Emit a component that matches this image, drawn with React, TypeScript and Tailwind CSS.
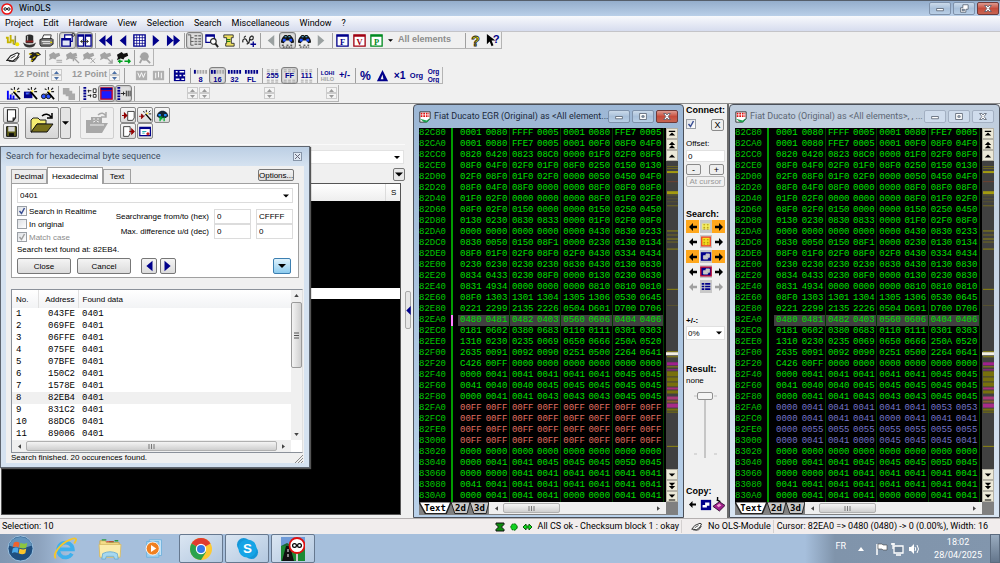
import type { ReactNode } from "react";
import { clsx } from "clsx";

const NAVY = "#00008b";
const GREY = "#a3a3a3";

/* ---------- toolbar glyphs, all on a 16x16 grid ---------- */

const left = (c: string) => <path d="M12 2v12L5 8z" fill={c} />;
const right = (c: string) => <path d="M4 2v12l7-6z" fill={c} />;

const label = (text: string, size = 8, y = 11, color = NAVY) => (
  <text x="8" y={y} textAnchor="middle" fontSize={size} fontWeight="bold" fill={color} fontFamily="Liberation Sans, sans-serif">
    {text}
  </text>
);

const dots = (c: string, y: number) => (
  <path d={`M2 ${y}h12M2 ${y + 2}h12`} stroke={c} strokeWidth="1" strokeDasharray="3 1.5" />
);

const binoculars = (
  <>
    <path d="M1 10c0-4 2-6 4-8h2l1 1 1-1h2c2 2 4 4 4 8l-3 1-2-3H6l-2 3z" fill="#111" />
    <path d="M3 6h3v3H3zM10 6h3v3h-3z" fill="#1d4fff" />
    <path d="M5 4h2M9 4h2" stroke="#5fd0ff" />
    <path d="M2 13h3M7 13h2M11 13h3M3 15h10" stroke="#111" strokeDasharray="2 1" />
  </>
);

const letterBox = (text: string, c: string) => (
  <>
    <path d="M2 2h12v12H2z" fill="#fff" stroke={c} strokeWidth="1.4" />
    <path d="M2 3h12" stroke={c} strokeWidth="2" />
    <text x="8" y="12.5" textAnchor="middle" fontSize="9" fontWeight="bold" fill={c} fontFamily="Liberation Serif, serif">
      {text}
    </text>
  </>
);

const wand = (
  <>
    <path d="M8 6l7 8" stroke="#000" strokeWidth="1.8" />
    <path d="M9 1v3M14 2l-2 2M15 6h-3M5 3l2 1M7 8l-1 1" stroke="#222" strokeWidth="1.2" />
    <path d="M9 5l2 1" stroke="#ffe94a" strokeWidth="2" />
  </>
);

const plug = (c: string, extra?: ReactNode) => (
  <>
    <path d="M1 5l5-3 2 2 4-1 1 3-4 2-1 2-3-1-4 2 1-3z" fill={c} />
    {extra}
  </>
);

const hand = (
  <>
    <path d="M1 11l4-5 7-3 2 1-2 4-5 4-3-1z" fill="#fff" stroke="#222" strokeWidth="1.2" />
    <path d="M5 9l5-3M3 12h7l4-5" fill="none" stroke="#222" />
  </>
);

const bars = (fill: string) => (
  <path d="M2 2v4M5 2v4M8 2v4M11 2v4M14 2v4" stroke={fill} strokeWidth="2" />
);

const grid = (
  <>
    <path d="M2 2h12v12H2z" fill="#fff" stroke={NAVY} strokeWidth="1.5" />
    <path d="M2 5h12M2 8h12M2 11h12M5 2v12M8 2v12M11 2v12" stroke={NAVY} strokeWidth=".8" />
  </>
);

const glyphs: Record<string, ReactNode> = {
  wave: (
    <>
      <path d="M1 5h2v5h3V2M5 8h4v4" fill="none" stroke="#c5b400" strokeWidth="2" />
      <path d="M11 3v9M9 12h5" stroke="#8a8a60" strokeWidth="1.6" />
      <circle cx="13" cy="12" r="2.2" fill="#f2e400" />
    </>
  ),
  hat: (
    <>
      <path d="M4 3q4-3 8 0v8H4z" fill="#2b2b2b" />
      <path d="M4 8h8v2H4z" fill="#822" />
      <path d="M1 10q7 5 14 0l-2 4q-5 3-10 0z" fill="#333" />
      <path d="M6 3v5" stroke="#ccc" />
    </>
  ),
  print: (
    <>
      <path d="M5 2h8l-1 5H3z" fill="#fff" stroke="#333" />
      <path d="M1 7l3-1h10l1 1v5l-3 2H2l-1-2z" fill="#777" stroke="#222" />
      <path d="M3 9h9M4 11h8" stroke="#eee" />
      <path d="M12 10h2" stroke="#e6d600" strokeWidth="1.5" />
    </>
  ),
  windows: (
    <>
      <path d="M5 2h8v7H5z" fill="#fff" stroke={NAVY} strokeWidth="1.3" />
      <path d="M2 6h9v8H2z" fill="#dfe4f5" stroke={NAVY} strokeWidth="1.5" />
      <path d="M2 7h9" stroke={NAVY} strokeWidth="2" />
      <circle cx="14" cy="2" r="1.5" fill="none" stroke="#333" />
    </>
  ),
  split: (
    <>
      <path d="M1 2h6v12H1zM9 2h6v12H9z" fill="#fff" stroke={NAVY} strokeWidth="1.4" />
      <path d="M1 3h6M9 3h6" stroke={NAVY} strokeWidth="2" />
      <path d="M4 9h8M6 7L4 9l2 2M10 7l2 2-2 2" stroke="#222" fill="none" />
    </>
  ),
  first: <path d="M8 2v12L1 8zM15 2v12L8 8z" fill={NAVY} />,
  prev: left(NAVY),
  grid,
  next: right(NAVY),
  last: <path d="M1 2v12l7-6zM8 2v12l7-6z" fill={NAVY} />,
  tree: (
    <>
      <path d="M1 2h3M4 2v11M4 5h3M4 9h3M4 13h3" stroke="#555" fill="none" />
      <path d="M8 3h3M8 6h3M8 9h3M8 12h3M12 3h3M12 6h3M12 9h3M12 12h3" stroke="#777" strokeWidth="1.6" />
    </>
  ),
  zoomwin: (
    <>
      <path d="M2 2h9v8H2z" fill="#fff" stroke={NAVY} strokeWidth="1.3" />
      <path d="M2 3h9" stroke={NAVY} strokeWidth="2" />
      <circle cx="10" cy="9" r="3" fill="#fff" stroke="#222" strokeWidth="1.2" />
      <path d="M12 11l3 4" stroke="#222" strokeWidth="2" />
    </>
  ),
  scroll: (
    <>
      <path d="M3 2h10v3h-2v6h3v3H5v-3h1V5H3z" fill="#f0e060" stroke="#333" />
      <path d="M6 7h4M6 9h4" stroke="#087808" />
    </>
  ),
  chain: (
    <>
      <path d="M1 10c-1-4 3-5 4-2s3 3 3-1 4-5 4-2-3 3-4 1M2 5l2-2M5 12l3-2" fill="none" stroke="#222" strokeWidth="1.3" />
      <path d="M9 12h6M12 9v6" stroke={NAVY} strokeWidth="1.4" />
    </>
  ),
  prevOff: left("#9aa0a0"),
  nextOff: right("#9aa0a0"),
  findText: binoculars,
  findHex: binoculars,
  boxF: letterBox("F", NAVY),
  boxV: letterBox("V", "#a00010"),
  boxP: letterBox("P", "#008a20"),
  help: (
    <text x="8" y="14" textAnchor="middle" fontSize="15" fontWeight="bold" fill="#f5ea00" stroke="#222" strokeWidth="0.9" fontFamily="Liberation Sans, sans-serif">
      ?
    </text>
  ),
  whats: (
    <>
      <path d="M2 1v11l3-3 2 5 2-1-2-5h4z" fill="#000" />
      <text x="12" y="11" textAnchor="middle" fontSize="12" fontWeight="bold" fill={NAVY} fontFamily="Liberation Sans, sans-serif">
        ?
      </text>
    </>
  ),
  hand,
  plugYellow: (
    <>
      <path d="M2 4l4-2 2 1 4-1 3 3-4 2-2 3-3 3-2-1 1-3-3-1 2-2z" fill="#222" />
      <path d="M2 4l3 1M6 9l3-2M10 4l3 1M4 12l2-1" stroke="#e8cf00" strokeWidth="1.2" />
    </>
  ),
  plugEq: plug(GREY, <path d="M9 11h6M9 13h6" stroke={GREY} />),
  plugUp: plug(GREY, <path d="M9 8h4M9 8v4M9 8l6 6" stroke={GREY} strokeWidth="1.5" />),
  plugX: plug(GREY, <path d="M9 9l5 5M14 9l-5 5M8 9h3" stroke={GREY} />),
  plugDown: plug(GREY, <path d="M8 8l6 6M14 10v4h-4" stroke={GREY} strokeWidth="1.5" fill="none" />),
  plugGo: plug("#111", <path d="M2 12h5M4 10v4M9 12h6M13 10l2 2-2 2" stroke="#00a020" strokeWidth="1.6" fill="none" />),
  magnet: (
    <>
      <circle cx="8" cy="7" r="4.5" fill={GREY} />
      <path d="M3 7h9M5 10l-2 4M10 10l4 4" stroke={GREY} strokeWidth="2" />
    </>
  ),
  chipA: (
    <>
      <path d="M2 3h12v10H2z" fill="#b0b0b0" />
      <path d="M4 5l2 5 2-5 2 5 2-5" fill="none" stroke="#fff" />
    </>
  ),
  chipB: (
    <>
      <path d="M2 3h12v10H2z" fill="#b0b0b0" />
      <path d="M5 5v6M8 4v6M11 5v6" stroke="#fff" />
    </>
  ),
  table: (
    <>
      <path d="M2 2h12v12H2z" fill={NAVY} />
      <path d="M4 4h2M8 4h5M4 8h2M8 8h2M12 8h2M4 12h4M10 12h3" stroke="#fff" strokeWidth="1.5" />
    </>
  ),
  b8: (
    <>
      {bars("#a8a8a8")}
      <path d="M2 2v4" stroke={NAVY} strokeWidth="2" />
      {label("8", 8, 15)}
    </>
  ),
  b16: (
    <>
      {bars("#a8a8a8")}
      <path d="M2 2v4M5 2v4" stroke={NAVY} strokeWidth="2" />
      {label("16", 8, 15)}
    </>
  ),
  b32: (
    <>
      {bars(NAVY)}
      {label("32", 8, 15)}
    </>
  ),
  bFl: (
    <>
      {bars(NAVY)}
      {label("FL", 8, 15)}
    </>
  ),
  n255: (
    <>
      {dots(GREY, 2)}
      {dots(GREY, 13)}
      {label("255", 8)}
    </>
  ),
  nFF: (
    <>
      {dots(GREY, 2)}
      {dots(GREY, 13)}
      {label("FF", 8)}
    </>
  ),
  n111: (
    <>
      {dots(GREY, 2)}
      {dots(GREY, 13)}
      {label("111", 8)}
    </>
  ),
  lohi: (
    <>
      {label("LOHI", 6, 7)}
      {label("HILO", 6, 14, GREY)}
    </>
  ),
  sign: label("+/-", 10, 11),
  percent: label("%", 13, 13),
  delta: <path d="M8 2l6 12H2zM8 7l-2 5h3z" fill={NAVY} fillRule="evenodd" />,
  x1: label("×1", 11, 12),
  org: label("Org", 8),
  orgOrg: (
    <>
      {label("Org", 7, 6)}
      {label("Org", 7, 15)}
    </>
  ),
  wandBars: (
    <>
      <path d="M2 5v9M5 9v5M8 10v4" stroke="#0000ff" strokeWidth="2" />
      <path d="M1 14h12" stroke={NAVY} />
      {wand}
    </>
  ),
  wandBox: (
    <>
      <path d="M1 6h9v7H1z" fill={NAVY} />
      <path d="M3 8h4" stroke="#4b6bff" strokeWidth="2" />
      {wand}
    </>
  ),
  wandFind: (
    <>
      <circle cx="4" cy="11" r="2.5" fill="#2d55ff" stroke="#111" />
      <circle cx="9" cy="11" r="2.5" fill="#2d55ff" stroke="#111" />
      {wand}
    </>
  ),
  stack: <path d="M2 2h7v3h3v3h3v7H8v-4H5V9H2z" fill="#aaa" />,
  mapList: (
    <>
      <path d="M3 1v14" stroke={NAVY} strokeWidth="3" strokeDasharray="2 1" />
      <path d="M6 5h4M6 10h4M7 4v3M9 9v3" stroke="#222" />
      <path d="M12 3h3v4h-3zM12 9h3v3h-3z" fill="#fff" stroke="#222" />
    </>
  ),
  redBox: (
    <>
      <path d="M2 2h12v12H2z" fill="#1b1bff" stroke="#c00020" strokeWidth="1.4" />
      <path d="M2 3h12" stroke={NAVY} strokeWidth="2" />
      <path d="M2 5h12" stroke="#c00020" />
    </>
  ),
  mapBars: (
    <>
      <path d="M3 1v14" stroke={NAVY} strokeWidth="3" strokeDasharray="2 1" />
      <path d="M5 8h5M8 6v4M11 5v6M13 5v6M15 5v6" stroke="#222" />
    </>
  ),
  page: <path d="M3 1h10v10l-3 4H3zM13 11h-3v4" fill="#fff" stroke="#222" strokeWidth="1.3" />,
  save: (
    <>
      <path d="M2 2h12v12H2z" fill="#5e5e18" stroke="#111" strokeWidth="1.2" />
      <path d="M4 2h8v6H4z" fill="#d8d8d8" />
      <path d="M5 10h6v4H5z" fill="#111" />
    </>
  ),
  pageIn: (
    <>
      <path d="M7 3h8v8l-2 3H7z" fill="#fff" stroke="#222" />
      <path d="M0 8h6M3 5l3 3-3 3z" stroke="#900000" fill="#900000" strokeWidth="1.3" />
    </>
  ),
  pageOut: (
    <>
      <path d="M2 2h8v8l-2 4H2z" fill="#fff" stroke="#222" />
      <path d="M9 8h4M12 5l3 3-3 3z" stroke="#900000" fill="#900000" strokeWidth="1.3" />
    </>
  ),
  wandIn: (
    <>
      <path d="M0 9h5M3 6l3 3-3 3z" stroke="#900000" fill="#900000" />
      {wand}
    </>
  ),
  findGreen: (
    <>
      <path d="M1 9c0-4 3-7 7-7s7 3 7 7l-3 2H4z" fill="#123" />
      <path d="M3 6h3v3H3zM10 6h3v3h-3z" fill="#1d8fff" />
      <path d="M5 15v-5h3M5 12h3M10 15v-5" stroke="#00b030" strokeWidth="1.6" fill="none" />
    </>
  ),
  card: (
    <>
      <path d="M1 3h13v10H1z" fill="#fff" stroke={NAVY} strokeWidth="1.5" />
      <path d="M1 4h13" stroke={NAVY} strokeWidth="2" />
      <path d="M4 8h5M4 10h3" stroke="#00a0a0" />
      <path d="M9 11h4M11 9v4" stroke="#c00000" strokeWidth="1.5" />
    </>
  ),
};

const Glyph = ({ name, className = "size-[15px]" }: { name: string; className?: string }) => (
  <svg viewBox="0 0 16 16" className={className} aria-hidden="true">
    {glyphs[name]}
  </svg>
);

const Tool = ({ name, pressed }: { name: string; pressed?: boolean }) => (
  <button
    type="button"
    aria-label={name}
    className={clsx(
      "flex h-[17px] w-[17px] shrink-0 items-center justify-center rounded-[3px]",
      pressed && "border border-[#808080] bg-[#e0e0e0] shadow-[inset_0_0_2px_#999]"
    )}
  >
    <Glyph name={name} />
  </button>
);

const Sep = () => (
  <span className="flex h-[15px] w-1 shrink-0 justify-center">
    <span className="w-px bg-[#a0a0a0]" />
  </span>
);

const Tools = ({ items }: { items: string[] }) => (
  <>
    {items.map((item, i) =>
      item === "|" ? <Sep key={i} /> : <Tool key={i} name={item.replace("!", "")} pressed={item.endsWith("!")} />
    )}
  </>
);

const Spinner = ({ active }: { active?: boolean }) => (
  <span className="flex w-[11px] shrink-0 flex-col">
    {["up", "down"].map((dir) => (
      <button
        key={dir}
        type="button"
        aria-label={dir}
        className="flex h-[6px] items-center justify-center border border-[#cccccc] bg-[#f4f4f4]"
      >
        <svg viewBox="0 0 5 3" className="h-[3px] w-[5px]">
          <path d={dir === "up" ? "M0 3h5L2.5 0z" : "M0 0h5L2.5 3z"} fill={active ? "#4b6fa5" : "#999"} />
        </svg>
      </button>
    ))}
  </span>
);

const Caret = ({ className = "h-1 w-[7px]" }: { className?: string }) => (
  <svg viewBox="0 0 8 4" className={clsx("shrink-0", className)} aria-hidden="true">
    <path d="M0 0h8L4 4z" fill="#000" />
  </svg>
);

const CheckBox = ({ id, checked, disabled }: { id: string; checked?: boolean; disabled?: boolean }) => (
  <span className="relative inline-flex size-[10px] shrink-0">
    <input
      id={id}
      type="checkbox"
      defaultChecked={checked}
      disabled={disabled}
      className="peer size-full appearance-none border border-[#9a9fa5] bg-linear-to-br from-[#dde0e4] to-white"
    />
    <svg viewBox="0 0 10 10" className="pointer-events-none absolute inset-0 hidden size-full peer-checked:block">
      <path d="M2.5 5l2 2.500 3-5.500" fill="none" stroke={disabled ? "#a0a0a0" : "#3a4f94"} strokeWidth="1.5" />
    </svg>
  </span>
);

const RoundLogo = ({ className }: { className: string }) => (
  <svg viewBox="0 0 16 16" className={className} aria-hidden="true">
    <circle cx="8" cy="8" r="6.8" fill="#fff" stroke="#ee1111" strokeWidth="2" />
    <circle cx="5.6" cy="8" r="1.7" fill="none" stroke="#000" strokeWidth="1.2" />
    <circle cx="10.4" cy="8" r="1.7" fill="none" stroke="#000" strokeWidth="1.2" />
    <path d="M7 8h2" stroke="#000" />
  </svg>
);

/* ---------- window caption buttons ---------- */

const captionPaths: Record<string, string> = {
  minimize: "M3 6h9v3H3z",
  maximize: "M3 2h9v8H3zM6 5h3v2H6z",
  restore: "M6 1h7v6h-3v4H3V5h3zM5 7h3v2H5z",
  close: "M3 2h3l1.500 2L9 2h3L9 6l3 4H9L7.500 8 6 10H3l3-4z",
};

const CaptionButton = ({ kind, red, dim }: { kind: string; red?: boolean; dim?: boolean }) => (
  <button
    type="button"
    aria-label={kind}
    className={clsx(
      "flex h-[13px] w-[22px] items-center justify-center rounded-[2px] border",
      red
        ? "border-[#6e3a3a] bg-linear-to-b from-[#dd9a90] via-[#c64c3c] to-[#c66452]"
        : dim
          ? "border-[#a3b0c2] bg-[#cfdcec]"
          : "border-[#7f92ab] bg-linear-to-b from-[#cbdaea] via-[#a9c0da] to-[#b9cfe6]"
    )}
  >
    <svg viewBox="0 0 15 12" className="h-[9px] w-[12px]">
      <path d={captionPaths[kind]} fill="#fff" fillRule="evenodd" stroke="#4c5666" strokeWidth="1" />
    </svg>
  </button>
);

/* ---------- hex dump ---------- */

const START = 0x82c80;
const CURSOR = 0x82ea0;

const dump = `0001 0080 FFFF 0005 0001 0080 FFE7 0005
0001 0080 FFE7 0005 0001 00F0 08F0 04F0
0820 0420 0823 08C0 0000 01F0 02F0 08F0
08F0 04F0 02F0 01F0 08F0 0250 0150 0130
02F0 08F0 01F0 02F0 0000 0050 0450 04F0
08F0 04F0 08F0 0000 0000 08F0 08F0 08F0
01F0 02F0 0000 0000 0000 08F0 01F0 02F0
08F0 02F0 0150 0000 0000 0150 0250 0450
0130 0230 0830 0833 0000 01F0 02F0 08F0
0000 0000 0000 0000 0000 0430 0830 0233
0830 0050 0150 08F1 0000 0230 0130 0134
08F0 01F0 02F0 08F0 02F0 0430 0334 0434
0230 0230 0230 0230 0830 0430 0130 0830
0834 0433 0230 08F0 0000 0130 0230 0830
0831 4934 0000 0000 0000 0810 0810 0810
08F0 1303 1301 1304 1305 1306 0530 0645
0221 2299 2135 2226 0504 D601 D700 D706
0480 0481 0482 0403 0560 0606 0404 0406
0181 0602 0380 0683 0110 0111 0301 0303
1310 0230 0235 0069 0650 0666 250A 0520
2635 0091 0092 0090 0251 0500 2264 0641
C426 00FF 0000 0000 0000 0000 0000 0000
0000 0041 0041 0041 0041 0041 0045 0045
0041 0040 0040 0045 0045 0045 0045 0045
0000 0041 0041 0043 0043 0043 0045 0045
0000 0041 0041 0041 0041 0041 0053 0053
0000 0041 0041 0041 0000 0041 0041 0041
0000 0055 0055 0055 0055 0055 0055 0055
0000 0041 0041 0000 0045 0045 0045 0041
0000 0000 0000 0000 0000 0000 0000 0000
0000 0041 0041 0045 0045 0045 005D 0045
0000 0000 0041 0041 0041 0041 0041 0041
0041 0041 0041 0041 0041 0041 0041 0041
0000 0041 0041 0041 0000 0000 0041 0041`
  .split("\n")
  .map((line) => line.split(" "));

const CHANGED = [25, 26, 27, 28];

// [offset, thickness, colour] along the overview strip
const overview: [number, number, string][] = [
  [5, 1, "#6b6420"], [7, 1, "#6b6420"], [10, 2, "#a39a10"], [20, 1, "#6b4030"], [30, 3, "#a39a10"],
  [34, 1, "#575230"], [37, 1, "#575230"], [40, 1, "#575230"], [44, 1, "#706820"], [69, 1, "#8d8410"],
  [73, 1, "#706820"], [77, 1, "#8d8410"], [80, 1, "#706820"], [87, 1, "#8d8410"], [127, 1, "#8d8410"],
  [143, 1, "#575230"], [189, 1, "#8d8410"], [194, 1, "#8d8410"], [200, 3, "#a0208c"], [204, 1, "#8d8410"],
  [207, 1, "#a0208c"], [209, 5, "#77700c"], [215, 4, "#77700c"], [220, 4, "#77700c"], [225, 2, "#a82c78"],
  [228, 3, "#77700c"], [234, 3, "#a83878"], [238, 2, "#8d6030"], [241, 4, "#a82c88"], [246, 2, "#77700c"],
  [249, 1, "#77700c"], [283, 1, "#8d8410"],
];

const ScrollKey = ({ d, name }: { d: string; name: string }) => (
  <button type="button" aria-label={name} className="flex h-[11px] w-3 items-center justify-center border border-[#b5b2a6] bg-[#ece9d8]">
    <svg viewBox="0 0 10 10" className="size-[8px]">
      <path d={d} fill="#000" />
    </svg>
  </button>
);

const SheetTab = ({ text, active }: { text: string; active?: boolean }) => (
  <button type="button" className={clsx("relative h-3 shrink-0", active ? "w-[32px]" : "w-[19px]")}>
    <svg viewBox="0 0 20 12" preserveAspectRatio="none" className="absolute inset-0 h-full w-full">
      <path d="M0 0h20l-3 11.500H4z" fill={active ? "#fff" : "#c8c8c8"} stroke="#222" strokeWidth="1" />
    </svg>
    <span className="relative font-['DejaVu_Sans_Mono',monospace] text-[9px] leading-[11px] font-bold text-black">{text}</span>
  </button>
);

const HScroll = ({ thumb }: { thumb: string }) => (
  <div className="flex h-3 flex-1 items-center bg-[#efefef] px-[6px]">
    <svg viewBox="0 0 4 6" className="h-[5px] w-[3px]">
      <path d="M4 0v6L0 3z" fill="#444" />
    </svg>
    <div className={clsx("mx-[5px] flex h-[10px] items-center justify-center rounded-[2px] border border-[#b0b0b0] bg-linear-to-b from-[#f4f4f4] to-[#cfcfcf]", thumb)}>
      <svg viewBox="0 0 7 5" className="h-[5px] w-[7px]">
        <path d="M1 0v5M3.500 0v5M6 0v5" stroke="#777" />
      </svg>
    </div>
    <svg viewBox="0 0 4 6" className="ml-auto h-[5px] w-[3px]">
      <path d="M0 0v6l4-3z" fill="#444" />
    </svg>
  </div>
);

const HexWindow = ({ title, active }: { title: string; active?: boolean }) => (
  <section
    className={clsx(
      "flex min-w-0 flex-1 flex-col rounded-t-[4px] border border-[#4a4f58] px-[5px] pb-[2px]",
      active ? "bg-linear-to-b from-[#9db7d5] to-[#b9d1ea]" : "bg-linear-to-b from-[#bfcddd] to-[#d7e4f2]"
    )}
  >
    <header className="flex h-[23px] shrink-0 items-center gap-[3px]">
      <svg viewBox="0 0 14 14" className="size-[12px] shrink-0">
        <path d="M1 1h12v8l-4 4H1z" fill="#fff" stroke="#222" />
        <path d="M1 9l5 4h4l3-5-4 3z" fill="#1fa050" />
        <path d="M2 3h10M2 6h10" stroke="#e01010" strokeWidth="2" strokeDasharray="2 1" />
      </svg>
      <h2 className={clsx("min-w-0 flex-1 text-[9px] whitespace-nowrap", active ? "text-[#1c2a3c]" : "text-[#5c6673]")}>{title}</h2>
      <div className="flex gap-[2px]">
        <CaptionButton kind="minimize" dim={!active} />
        <CaptionButton kind="maximize" dim={!active} />
        <CaptionButton kind="close" red={active} dim={!active} />
      </div>
    </header>

    <div className="flex min-h-0 flex-1 bg-black">
      <div className="min-w-0 flex-1 overflow-hidden pr-[2px]">
        <table className="w-full table-fixed border-collapse font-['Liberation_Mono',monospace] text-[9px] leading-[11px] text-[#00e000]">
          <colgroup>
            <col className="w-[33px]" />
            <col className="w-[6px]" />
            {dump[0].map((_, i) => (
              <col key={i} />
            ))}
          </colgroup>
          <tbody>
            {dump.map((row, i) => {
              const address = START + i * 0x20;
              const isCursor = address === CURSOR;
              const changed = CHANGED.includes(i);
              return (
                <tr key={address} className="h-[11px]">
                  <th scope="row" className="p-0 text-left font-normal text-[#00c800]">
                    {address.toString(16).toUpperCase()}
                  </th>
                  <td className={clsx("border-l-2 p-0", active && isCursor ? "border-[#ff80ff]" : "border-[#009c00]")} />
                  {row.map((word, j) => (
                    <td
                      key={j}
                      className={clsx(
                        "p-0 pl-[2px]",
                        j % 2 === 1 && "border-r border-[#003c00]",
                        isCursor && "bg-[#404040]",
                        changed && (active ? "text-[#e07062]" : "text-[#7474c8]")
                      )}
                    >
                      {changed && active ? "00FF" : word}
                    </td>
                  ))}
                </tr>
              );
            })}
          </tbody>
        </table>
      </div>
      <div className="flex w-3 shrink-0 flex-col">
        <ScrollKey name="to top" d="M1 1h8v1.500H1zM1 7h8L5 3z" />
        <ScrollKey name="page up" d="M1 5h8L5 1zM1 9h8L5 5z" />
        <ScrollKey name="line up" d="M1 7h8L5 3z" />
        <svg viewBox="0 0 12 306" preserveAspectRatio="none" className="min-h-0 w-full flex-1 bg-[#404040]">
          {overview.map(([y, h, color]) => (
            <rect key={y} x="1" y={y} width="11" height={h} fill={color} />
          ))}
          <rect x="0" y="190" width="12" height="3" fill="#f4efe0" />
        </svg>
        <ScrollKey name="line down" d="M1 3h8L5 7z" />
        <ScrollKey name="page down" d="M1 1h8L5 5zM1 5h8L5 9z" />
        <ScrollKey name="to bottom" d="M1 2h8L5 6zM1 8h8v1.500H1z" />
      </div>
    </div>

    <footer className="flex h-[13px] shrink-0 bg-[#808080]">
      <SheetTab text="Text" active />
      <SheetTab text="2d" />
      <SheetTab text="3d" />
      <HScroll thumb="w-[57px]" />
      <span className="w-3 bg-[#808080]" />
    </footer>
  </section>
);

/* ---------- connect strip between the two windows ---------- */

const arrowL = "M0 5l5-5v3.500h5v3H5V10z";
const arrowR = "M10 5L5 0v3.500H0v3h5V10z";

const searchRows = [
  { name: "byte", on: true, art: <path d="M2 3h10v8H2z" fill="#f6f060" stroke="#c8c8c8" /> },
  { name: "map", art: <path d="M2 2h10v10H2z" fill="#f6e020" stroke="#f04020" strokeWidth="1.5" /> },
  { name: "area", on: true, art: <path d="M1 2h12v10H1z" fill={NAVY} /> },
  { name: "frame", art: <path d="M1 2h12v10H1z" fill={NAVY} stroke="#c00030" strokeWidth="1.5" /> },
  { name: "list", off: true, art: <path d="M2 4h3M6 4h6M2 7h3M6 7h6M2 10h3M6 10h6" stroke={NAVY} strokeWidth="2" /> },
];

const smallButton = "h-[11px] w-[15px] rounded-[2px] border border-[#8a8a8a] bg-[#eee] text-[9px] leading-[8px]";

const ConnectPanel = () => (
  <aside className="flex w-[45px] shrink-0 flex-col overflow-hidden border-r-2 border-[#6c6c6c] bg-[#f0f0f0] pl-[2px] font-['Liberation_Sans',sans-serif] text-[8px] leading-[11px] text-black">
    <h3 className="mt-px text-[9px] font-bold">Connect:</h3>
    <div className="mt-[3px] flex items-start justify-between pr-[3px]">
      <label htmlFor="connect" aria-label="Connect" className="flex">
        <CheckBox id="connect" checked />
      </label>
      <button type="button" className="h-3 w-[13px] rounded-[2px] border border-[#8a8a8a] bg-[#eee] text-[9px] leading-[10px]">X</button>
    </div>
    <label htmlFor="offset" className="mt-[7px]">Offset:</label>
    <input id="offset" defaultValue="0" className="mt-[1px] h-3 w-[39px] border border-[#e0e0e0] bg-white px-px" />
    <div className="mt-[2px] flex justify-between pr-[3px]">
      <button type="button" className={smallButton}>-</button>
      <button type="button" className={smallButton}>+</button>
    </div>
    <button type="button" disabled className="mt-[1px] h-[11px] w-[39px] rounded-[2px] border border-[#b8b8b8] leading-[9px] text-[#999]">
      At cursor
    </button>

    <h3 className="mt-[22px] text-[9px] font-bold">Search:</h3>
    <div className="flex flex-col gap-[2px]">
      {searchRows.map((row) => (
        <div key={row.name} className="flex w-[39px] justify-between">
          {[arrowL, arrowR].map((d, i) => (
            <button
              key={d}
              type="button"
              aria-label={`${row.name} ${i ? "next" : "previous"}`}
              className={clsx("flex h-[13px] w-[13px] items-center justify-center", i ? "order-3" : "order-1", row.on && "bg-[#ffa71c]")}
            >
              <svg viewBox="0 0 10 10" className="size-[8px]">
                <path d={d} fill={row.off ? "#a0a0a0" : "#000"} />
              </svg>
            </button>
          ))}
          <svg viewBox="0 0 14 14" className="order-2 h-[13px] w-3 bg-[#c8c8c8]">
            {row.art}
            {(row.name === "byte" || row.name === "map") && (
              <path d="M4 5h2M8 5h2M4 8h2M8 8h2M4 10h2M8 10h2" stroke="#a08000" />
            )}
            {(row.name === "area" || row.name === "frame") && (
              <path d="M4 6h3V4h4v4H9v2H4z" fill="#c8c8c8" stroke="#c8c8c8" />
            )}
          </svg>
        </div>
      ))}
    </div>

    <label htmlFor="tolerance" className="mt-[22px] font-bold">+/-:</label>
    <div className="relative w-[39px]">
      <select id="tolerance" className="h-[14px] w-full appearance-none border border-[#e0e0e0] bg-white px-px">
        <option>0%</option>
      </select>
      <Caret className="pointer-events-none absolute top-[5px] right-[3px] h-1 w-[6px]" />
    </div>

    <h3 className="mt-[24px] text-[9px] font-bold">Result:</h3>
    <p>none</p>
    <svg viewBox="0 0 38 70" className="mt-1 h-[70px] w-[38px] shrink-0">
      <path d="M19 8v60" stroke="#b8b8b8" strokeWidth="1.5" />
      <path d="M8 6h3M28 6h3M8 64h3M28 64h3" stroke="#c0c0c0" />
      <rect x="11.5" y="2.5" width="15" height="7" rx="1.5" fill="#f4f4f4" stroke="#909090" />
    </svg>
    <h3 className="mt-[26px] text-[9px] font-bold">Copy:</h3>
    <div className="flex w-[39px] items-center justify-between">
      <svg viewBox="0 0 10 10" className="mx-[3px] size-[7px]">
        <path d={arrowL} />
      </svg>
      <svg viewBox="0 0 14 14" className="size-3">
        <path d="M1 1h12v12H1z" fill={NAVY} />
        <path d="M3 7h3V4h5v4H8v2H3z" fill="#fff" />
      </svg>
      <svg viewBox="0 0 14 16" className="h-[15px] w-[13px]">
        <path d="M1 10l7-5 6 4-6 6z" fill="#a0208c" stroke="#301030" />
        <path d="M6 0v4M5 3l4 2" stroke="#000" strokeWidth="1.5" />
        <path d="M5 9l3-2 2 2-3 2z" fill="#f0a0d0" />
      </svg>
    </div>
  </aside>
);

/* ---------- project panel on the left ---------- */

const PanelButton = ({ name, className, glyph = "size-[13px]" }: { name: string; className?: string; glyph?: string }) => (
  <button
    type="button"
    aria-label={name}
    className={clsx("flex h-4 w-4 items-center justify-center rounded-[2px] border border-[#8a8a8a] bg-linear-to-b from-[#f6f6f6] to-[#dadada]", className)}
  >
    <Glyph name={name} className={clsx("shrink-0", glyph)} />
  </button>
);

const ProjectPanel = () => (
  <div className="flex w-[411px] shrink-0 bg-[#f0f0f0]">
    <div className="flex min-w-0 flex-1 flex-col">
      <div className="flex h-[41px] items-start border-b border-[#fafafa] pt-[3px] pl-[3px]">
        <div className="flex flex-col">
          <PanelButton name="page" />
          <PanelButton name="save" />
        </div>
        <button type="button" aria-label="Open" className="ml-[6px] flex h-8 w-[34px] items-center justify-center rounded-[2px] border border-[#8a8a8a] bg-linear-to-b from-[#f4f4f4] to-[#d6d6d6]">
          <svg viewBox="0 0 26 24" className="h-[24px] w-[26px]">
            <path d="M2 9l2-2h5l2 2h6v4H8l-5 8H2z" fill="#f4ec70" stroke="#222" />
            <path d="M8 13h16l-6 8H2z" fill="#78701c" stroke="#111" />
            <path d="M13 5c3-3 7-2 9 1M23 2v5h-5" fill="none" stroke="#000" strokeWidth="1.5" />
          </svg>
        </button>
        <button type="button" aria-label="Recent" className="ml-px flex h-8 w-[11px] items-center justify-center rounded-[2px] border border-[#8a8a8a] bg-[#e4e4e4]">
          <Caret />
        </button>
        <button type="button" disabled aria-label="Import" className="ml-[9px] flex h-8 w-[34px] items-center justify-center rounded-[2px] border border-[#cfcfcf]">
          <svg viewBox="0 0 26 24" className="h-[24px] w-[26px]">
            <path d="M2 9h5V6h11v6h6l-6 10H2z" fill="#a8a8a8" />
            <path d="M9 8h2M13 8h2M9 11l3-1 3 1M6 14h14" stroke="#eee" />
            <path d="M14 4c3-3 6-2 8 1M22 1v5h-5" fill="none" stroke="#a8a8a8" strokeWidth="1.5" />
          </svg>
        </button>
        <div className="ml-[6px] grid grid-cols-3 gap-x-px">
          <PanelButton name="pageIn" />
          <PanelButton name="wandIn" />
          <PanelButton name="findGreen" />
          <PanelButton name="pageOut" />
          <PanelButton name="card" />
        </div>
      </div>
      <div className="mt-[5px] mr-px flex h-[14px] items-center justify-end border border-[#e2e2e2] bg-white pr-[3px]">
        <Caret className="h-[3px] w-[6px]" />
      </div>
      <div className="mt-1 flex justify-end">
        <button type="button" aria-label="Filter" className="flex h-[13px] w-3 items-center justify-center rounded-[2px] border border-[#777] bg-[#e8e8e8]">
          <Caret className="h-[5px] w-[8px]" />
        </button>
      </div>
      <div className="mt-[2px] mr-1 mb-[3px] ml-px flex flex-1 flex-col border border-[#555] bg-black">
        <div className="flex h-[17px] shrink-0 items-center justify-end bg-linear-to-b from-white to-[#eeeeee] font-['Liberation_Sans',sans-serif] text-[8px]">
          <span className="flex h-full w-[15px] items-center border-l border-[#dcdcdc] pl-[5px]">S</span>
        </div>
        <div className="mt-[87px] h-[11px] bg-white" />
      </div>
    </div>
    <button type="button" aria-label="Hide" className="mt-[187px] flex h-[38px] w-[6px] items-center justify-center rounded-[2px] border border-[#aaa] bg-[#e6e6e6]">
      <svg viewBox="0 0 5 10" className="h-[9px] w-[5px] shrink-0">
        <path d="M5 0v10L0 5z" fill={NAVY} />
      </svg>
    </button>
  </div>
);

/* ---------- search dialog ---------- */

const results = ["043FE", "069FE", "06FFE", "075FE", "07BFE", "150C2", "1578E", "82EB4", "831C2", "88DC6", "89006"];

const dialogButton = "rounded-[2px] border border-[#777] bg-linear-to-b from-[#f4f4f4] to-[#dcdcdc] text-center";
const fieldClass = "h-[15px] border border-[#dcdcdc] bg-white px-[2px]";
const tabClass = "border border-b-0 border-[#a0a0a0]";
const checkLabel = "flex h-3 items-center gap-[2px]";

const SearchDialog = () => (
  <div
    role="dialog"
    aria-labelledby="search-title"
    className="absolute top-[146px] left-0 flex w-[310px] flex-col border border-[#5f6670] bg-[#d5e2f0] px-[5px] pb-1 font-['Liberation_Sans',sans-serif] text-[8px] leading-[11px] text-black shadow-[1px_1px_1px_#555]"
  >
    <header className="-mx-[5px] flex h-[19px] items-center justify-between bg-linear-to-b from-[#bccfe4] to-[#d5e2f0] pr-[7px] pl-[5px]">
      <h2 id="search-title" className="font-['Roboto',sans-serif] text-[9px] text-[#3d4c60]">Search for hexadecimal byte sequence</h2>
      <button type="button" aria-label="Close dialog" className="flex h-[9px] w-[9px] items-center justify-center border border-[#8795a8] bg-[#dfe8f2]">
        <svg viewBox="0 0 6 6" className="size-[5px]">
          <path d="M0 0l6 6M6 0L0 6" stroke="#667" strokeWidth="1.2" />
        </svg>
      </button>
    </header>

    <div className="bg-[#f0f0f0] px-[5px] pt-px">
      <div className="flex items-end">
        <button type="button" className={clsx(tabClass, "h-[14px] w-[36px] bg-[#ededed]")}>Decimal</button>
        <button type="button" className={clsx(tabClass, "-mb-px h-[17px] w-[56px] bg-white")}>Hexadecimal</button>
        <button type="button" className={clsx(tabClass, "h-[14px] w-[28px] bg-[#ededed]")}>Text</button>
        <button type="button" className={clsx(dialogButton, "mr-[5px] mb-[2px] ml-auto h-3 w-[36px] leading-[9px]")}>Options...</button>
      </div>
      <div className="border border-[#a0a0a0] bg-white px-[5px] pt-1 pb-[3px]">
        <div className="relative">
          <input aria-label="Search for" defaultValue="0401" className="h-[15px] w-full border border-[#dcdcdc] px-[2px]" />
          <Caret className="absolute top-[6px] right-[4px] h-1 w-[6px]" />
        </div>
        <div className="flex justify-between">
          <div className="flex flex-col gap-px pt-[2px]">
            <label htmlFor="realtime" className={checkLabel}>
              <CheckBox id="realtime" checked /> Search in Realtime
            </label>
            <label htmlFor="original" className={checkLabel}>
              <CheckBox id="original" /> In original
            </label>
            <label htmlFor="match-case" className={clsx(checkLabel, "text-[#8c8c8c]")}>
              <CheckBox id="match-case" checked disabled /> Match case
            </label>
          </div>
          <div className="grid grid-cols-[auto_37px_37px] content-start items-center gap-x-[5px] pt-[6px]">
            <label htmlFor="range-from" className="text-right">Searchrange from/to (hex)</label>
            <input id="range-from" defaultValue="0" className={fieldClass} />
            <input aria-label="Range to" defaultValue="CFFFF" className={fieldClass} />
            <label htmlFor="diff-up" className="text-right">Max. difference u/d (dec)</label>
            <input id="diff-up" defaultValue="0" className={fieldClass} />
            <input aria-label="Difference down" defaultValue="0" className={fieldClass} />
          </div>
        </div>
        <p className="mt-px">Search text found at: 82EB4.</p>
        <div className="mt-[3px] flex items-center pr-[2px]">
          <button type="button" className={clsx(dialogButton, "h-4 w-[54px]")}>Close</button>
          <button type="button" className={clsx(dialogButton, "ml-[6px] h-4 w-[54px]")}>Cancel</button>
          <button type="button" aria-label="Previous" className={clsx(dialogButton, "ml-[10px] flex h-4 w-4 items-center justify-center")}>
            <Glyph name="prev" className="h-[14px] w-[14px] shrink-0" />
          </button>
          <button type="button" aria-label="Next" className={clsx(dialogButton, "ml-[3px] flex h-4 w-4 items-center justify-center")}>
            <Glyph name="next" className="h-[14px] w-[14px] shrink-0" />
          </button>
          <button type="button" aria-label="Less" className="ml-auto flex h-4 w-[18px] items-center justify-center rounded-[2px] border border-[#3c7fb1] bg-linear-to-b from-[#dff2fc] to-[#8ccbee]">
            <Caret className="h-1 w-[8px]" />
          </button>
        </div>
      </div>

      <div className="mt-[11px] -mr-1 border border-[#8b919a] border-r-[#e0e0e0] bg-white">
        <div className="flex">
          <div className="min-w-0 flex-1">
            <table className="w-full table-fixed border-collapse">
              <thead>
                <tr className="h-[18px] bg-linear-to-b from-white to-[#f2f3f5] text-left">
                  <th className="w-[26px] border-r border-[#e0e0e0] p-0 pl-1 font-normal">No.</th>
                  <th className="w-[40px] border-r border-[#e0e0e0] p-0 pr-[3px] text-right font-normal">Address</th>
                  <th className="p-0 pl-1 font-normal">Found data</th>
                </tr>
              </thead>
              <tbody className="font-['Liberation_Mono',monospace] text-[9px]">
                {results.map((address, i) => (
                  <tr key={address} className={clsx("h-3", address === "82EB4" && "bg-[#f0f0f0]")}>
                    <td className="p-0 pl-1">{i + 1}</td>
                    <td className="p-0 pr-[3px] text-right">{address}</td>
                    <td className="p-0 pl-1">0401</td>
                  </tr>
                ))}
              </tbody>
            </table>
          </div>
          <div className="flex w-[11px] flex-col items-center bg-[#f0f0f0] py-1">
            <svg viewBox="0 0 6 4" className="h-[3px] w-[5px]">
              <path d="M0 4h6L3 0z" fill="#444" />
            </svg>
            <div className="mt-[5px] flex h-[66px] w-[11px] items-center justify-center rounded-[2px] border border-[#9a9a9a] bg-linear-to-r from-[#f4f4f4] to-[#cfcfcf]">
              <svg viewBox="0 0 5 7" className="h-[7px] w-[5px]">
                <path d="M0 1h5M0 3.500h5M0 6h5" stroke="#555" />
              </svg>
            </div>
            <svg viewBox="0 0 6 4" className="mt-auto h-[3px] w-[5px]">
              <path d="M0 0h6L3 4z" fill="#444" />
            </svg>
          </div>
        </div>
        <div className="flex pr-[11px]">
          <HScroll thumb="flex-1" />
        </div>
      </div>
      <div className="-mr-1 flex h-[10px] items-end justify-between">
        <p className="leading-[10px]">Search finished. 20 occurences found.</p>
        <svg viewBox="0 0 9 9" className="size-[9px]">
          <path d="M1 9l8-8M4 9l5-5M7 9l2-2" stroke="#888" />
        </svg>
      </div>
    </div>
  </div>
);

/* ---------- task bar ---------- */

const TaskButton = ({ name, running, children }: { name: string; running?: boolean; children: ReactNode }) => (
  <button
    type="button"
    aria-label={name}
    className={clsx(
      "flex h-full items-center justify-center",
      running ? "mr-[2px] w-[44px] rounded-[2px] border border-[#66788f] bg-linear-to-br from-[#dbe6f2] to-[#b3c8e0]" : "w-[45px]"
    )}
  >
    {children}
  </button>
);

const TaskBar = () => (
  <nav className="flex h-[29px] shrink-0 items-stretch bg-[linear-gradient(90deg,#8097b2_0,#8ca2bd_38px,#a6bfdc_70px,#a6bfdc_calc(100%-195px),#8094ab_calc(100%-165px),#8296ad_100%)]">
    <button type="button" aria-label="Start" className="flex w-[40px] items-center justify-center">
      <svg viewBox="0 0 28 28" className="size-[27px]">
        <circle cx="14" cy="14" r="13" fill="#1f4f80" stroke="#9cc4e2" />
        <path d="M2 11a12.500 12.500 0 0 1 24 0q-12 5-24 0z" fill="#7fb0d6" opacity=".7" />
        <path d="M7 8q3-2 6 0l-1 5q-3-2-6 0z" fill="#f0622c" />
        <path d="M14 8q4 2 7 0l-1 5q-3 2-7 0z" fill="#8cc63f" />
        <path d="M6 14q3-2 6 0l-1 5q-3-2-6 0z" fill="#4aa8e8" />
        <path d="M13 14q4 2 7 0l-1 5q-3 2-7 0z" fill="#fbc52c" />
      </svg>
    </button>
    <span className="w-[2px]" />
    <TaskButton name="Internet Explorer">
      <svg viewBox="0 0 26 26" className="size-[24px]">
        <path d="M20.500 18A8 8 0 1 1 21.500 13.500H7" fill="none" stroke="#3fb0ec" strokeWidth="4" />
        <path d="M3 23C-1 19 8 7 18 3s7 1 5 4" fill="none" stroke="#f4c62c" strokeWidth="2" />
      </svg>
    </TaskButton>
    <TaskButton name="Explorer">
      <svg viewBox="0 0 26 24" className="h-[22px] w-6">
        <path d="M2 3h6l1 2h14v15H2z" fill="#f4dd8a" stroke="#c8a850" />
        <path d="M4 2h5M12 4h5M18 3h4" stroke="#2a9a40" strokeWidth="1.5" />
        <path d="M9 4h8" stroke="#e04030" />
        <path d="M1 7h24l-1 14H2z" fill="#fbecac" stroke="#d8bc68" />
        <path d="M4 23l1-6q8-4 16 0l1 6h-4l-1-3H9l-1 3z" fill="#a6d8f0" stroke="#70aed0" />
      </svg>
    </TaskButton>
    <TaskButton name="Media Player">
      <svg viewBox="0 0 24 24" className="size-[21px]">
        <path d="M6 2h14v18H6z" fill="#c5e3f6" stroke="#6fb1dc" />
        <path d="M3 4h14v18H3z" fill="#9fd0ef" stroke="#6fb1dc" />
        <circle cx="10" cy="12" r="7.5" fill="#f08020" stroke="#fff" />
        <path d="M8 8v8l6-4z" fill="#fff" />
      </svg>
    </TaskButton>
    <span className="w-[2px]" />
    <TaskButton name="Chrome" running>
      <svg viewBox="0 0 24 24" className="size-6">
        <circle cx="12" cy="12" r="11" fill="#fcc934" />
        <path d="M12 12L2.500 6.500A11 11 0 0 1 21.500 6.500z" fill="#e03b2f" />
        <path d="M12 12L2.500 6.500A11 11 0 0 0 12 23l5-8z" fill="#2ba24c" />
        <circle cx="12" cy="12" r="5.2" fill="#fff" />
        <circle cx="12" cy="12" r="4" fill="#3478e8" />
      </svg>
    </TaskButton>
    <TaskButton name="Skype" running>
      <svg viewBox="0 0 24 24" className="size-[23px]">
        <circle cx="8" cy="8" r="7" fill="#1496d8" />
        <circle cx="16" cy="16" r="7" fill="#1496d8" />
        <circle cx="12" cy="12" r="9.5" fill="#16a4e6" />
        <text x="12" y="17" textAnchor="middle" fontSize="14" fontWeight="bold" fill="#fff" fontFamily="Liberation Sans, sans-serif">
          S
        </text>
      </svg>
    </TaskButton>
    <TaskButton name="WinOLS" running>
      <svg viewBox="0 0 24 24" className="size-6">
        <path d="M0 0h24v24H0z" fill="#1c8a34" />
        <path d="M0 0h24v9H0z" fill="#6f9ad8" />
        <path d="M0 9l6-3 6 3z" fill="#1c6a34" />
        <path d="M5 9h4l4 15H1z" fill="#111" />
        <path d="M7 12v10" stroke="#fff" strokeDasharray="3 2" />
        <path d="M16 14v10" stroke="#ccc" strokeWidth="2" />
        <circle cx="16" cy="8.5" r="7.5" fill="#fff" stroke="#e01010" strokeWidth="1.8" />
        <circle cx="13.5" cy="8.5" r="1.9" fill="none" stroke="#000" strokeWidth="1.2" />
        <circle cx="18.5" cy="8.5" r="1.9" fill="none" stroke="#000" strokeWidth="1.2" />
      </svg>
    </TaskButton>

    <div className="ml-auto flex items-center leading-[13px] text-white">
      <span className="mr-3 mb-1">FR</span>
      <svg viewBox="0 0 6 4" className="mr-[9px] h-1 w-[6px]">
        <path d="M0 4h6L3 0z" fill="#fff" />
      </svg>
      <svg viewBox="0 0 44 14" className="mr-[13px] h-[14px] w-[48px]">
        <path d="M2 2v11" stroke="#fff" strokeWidth="1.5" />
        <path d="M3 2h4l1 1h4v5H8L7 7H3z" fill="#fff" stroke="#444" strokeWidth=".6" />
        <path d="M19 4h9v7h-9zM21 13h5" fill="#6f8298" stroke="#fff" strokeWidth="1.3" />
        <path d="M18 1v6M16 2h4" stroke="#fff" strokeWidth="1.3" />
        <path d="M34 5h2l3-3v10l-3-3h-2z" fill="#fff" />
        <path d="M40 5q1.500 2 0 4M42 3q3 4 0 8" fill="none" stroke="#fff" />
      </svg>
      <div className="mr-2 text-center">
        <div>18:02</div>
        <div>28/04/2025</div>
      </div>
      <span className="h-[29px] w-[10px] border border-[#5b6b7f] bg-linear-to-b from-[#9aacc0] to-[#64768c]" />
    </div>
  </nav>
);

const menu = ["Project", "Edit", "Hardware", "View", "Selection", "Search", "Miscellaneous", "Window", "?"];
const row = "flex h-[17px] shrink-0 items-center border-b border-r border-[#b4b4b4] self-start";

export default function App() {
  return (
    <div className="relative flex h-screen w-full flex-col overflow-hidden bg-[#f0f0f0] font-['Roboto',sans-serif] text-[9px] text-black">
      <header className="flex h-4 shrink-0 items-center border-t border-[#555e6b] bg-linear-to-b from-[#94adcc] to-[#b9cfe8] pr-px pl-[1px]">
        <RoundLogo className="size-3" />
        <h1 className="ml-[6px] text-[9px]">WinOLS</h1>
        <div className="ml-auto flex gap-[2px]">
          <CaptionButton kind="minimize" />
          <CaptionButton kind="restore" />
          <CaptionButton kind="close" red />
        </div>
      </header>
      <nav className="flex h-4 shrink-0 items-center gap-[10px] border-b border-[#c4c4c8] bg-linear-to-b from-[#f8f9fc] to-[#d6dcee] pl-[5px]">
        {menu.map((item) => (
          <button key={item} type="button">
            {item}
          </button>
        ))}
      </nav>

      <div className={clsx(row, "pl-1")}>
        <Tools items={["wave", "hat", "print", "|", "windows!", "split!", "|", "first", "prev", "grid", "next", "last", "|", "tree!", "zoomwin", "scroll", "|", "chain", "|", "prevOff", "findText!", "findHex", "nextOff", "|", "boxF", "boxV", "boxP"]} />
        <Caret className="mx-[3px] h-[3px] w-[5px]" />
        <span className="ml-[2px] w-[65px] font-['Liberation_Sans',sans-serif] text-[9px] font-bold text-[#8c8c8c]">All elements</span>
        <Tools items={["|", "help", "whats"]} />
      </div>
      <div className={clsx(row, "pl-[5px]")}>
        <Tools items={["hand", "|", "plugYellow", "|", "plugEq", "plugUp", "plugX", "plugDown", "plugGo", "|", "magnet"]} />
      </div>
      <div className={clsx(row, "mt-px pl-[14px]")}>
        {[0, 1].map((i) => (
          <span key={i} className="mr-[10px] flex items-center gap-[2px] font-['Liberation_Sans',sans-serif] text-[9px] font-bold text-[#999]">
            <span className="w-[35px] whitespace-nowrap">12 Point</span>
            <Spinner active />
          </span>
        ))}
        <span className="-ml-2 flex w-[11px]">
          <Sep />
        </span>
        <Tools items={["chipA", "chipB", "|", "table", "|", "b8", "b16!", "b32", "bFl", "|", "n255", "nFF!", "n111", "|", "lohi", "sign", "|", "percent", "delta", "x1", "org", "orgOrg"]} />
      </div>
      <div className={clsx(row, "mt-px pl-[5px]")}>
        <Tools items={["wandBars", "wandBox", "wandFind", "|", "stack", "|", "mapList", "redBox!", "mapBars!", "|"]} />
        <span className="ml-[51px] flex gap-px">
          <Spinner />
          <Spinner />
        </span>
        <span className="ml-[54px]">
          <Spinner />
        </span>
        <span className="mr-px ml-[51px]">
          <Spinner />
        </span>
      </div>

      <main className="mt-px flex min-h-0 flex-1 border-t border-[#8c8c8c]">
        <ProjectPanel />
        <div className="flex min-w-0 flex-1 bg-[#f0f0f0] pl-[2px]">
          <HexWindow title="Fiat Ducato EGR (Original) as <All element..." active />
          <ConnectPanel />
          <HexWindow title="Fiat Ducato (Original) as <All elements>, , ..." />
        </div>
      </main>

      <footer className="flex h-4 shrink-0 items-center border-t border-[#b4b0b0] bg-[#f1eded] pr-3 pl-[2px]">
        <span>Selection: 10</span>
        <svg viewBox="0 0 38 10" className="mr-[5px] ml-auto h-[10px] w-[38px]">
          <path d="M1 1h8v1.500L6.500 5 9 7.500V9H1V7.500L3.500 5 1 2.500z" fill="#0c8a0c" stroke="#111" />
          <circle cx="19" cy="5" r="3.2" fill="#10d020" stroke="#0a5a0a" strokeDasharray="2 1" />
          <path d="M28 5l3-3v2h3V2l3 3-3 3V6h-3v2z" fill="#10e020" stroke="#0a5a0a" />
        </svg>
        <span className="border-r border-[#d4d0d0] pr-[2px]">All CS ok - Checksum block 1 : okay</span>
        <Glyph name="hand" className="mr-[5px] ml-[9px] h-3 w-3" />
        <span className="border-r border-[#d4d0d0] pr-[2px]">No OLS-Module</span>
        <span className="pl-[3px]">Cursor: 82EA0 =&gt; 0480 (0480) -&gt; 0 (0.00%), Width: 16</span>
      </footer>
      <TaskBar />
      <SearchDialog />
    </div>
  );
}
